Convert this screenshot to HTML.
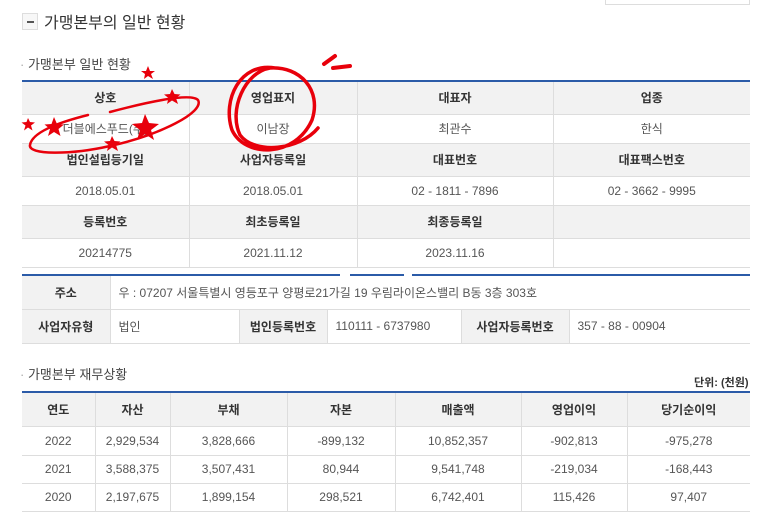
<!DOCTYPE html>
<html><head><meta charset="utf-8"><style>
*{margin:0;padding:0;box-sizing:border-box}
body{width:773px;height:531px;background:#fff;position:relative;overflow:hidden;font-family:"Liberation Sans","Noto Sans CJK KR",sans-serif;color:#555;font-size:12px}
.a{position:absolute}
table{position:absolute;border-collapse:collapse;table-layout:fixed}
td{border:1px solid #ddd;text-align:center;color:#555;font-size:12px;padding:0}
td.h{background:#f2f2f2;font-weight:bold;color:#333}
tr:first-child td{border-top:none}
td:first-child{border-left:none}td:last-child{border-right:none}
.blue{position:absolute;height:2px;background:#2b5ba8}
</style></head><body>
<div class="a" style="left:605px;top:0;width:145px;height:5px;border:1px solid #ddd;border-top:none"></div>
<div class="a" style="left:22px;top:13px;width:16px;height:17px;border:1px solid #ddd;background:#f7f7f7"><div class="a" style="left:4px;top:7px;width:7px;height:2px;background:#555"></div></div>
<div class="a" style="left:44px;top:9px;font-size:16px;color:#333">가맹본부의 일반 현황</div>
<div class="a" style="left:20px;top:54px;font-size:13px;color:#444"><span style="color:#aaa">·</span> 가맹본부 일반 현황</div>

<div class="blue" style="left:22px;top:80px;width:728px"></div>
<table style="left:22px;top:82px;width:728px">
<colgroup><col style="width:167px"><col style="width:168px"><col style="width:196px"><col style="width:197px"></colgroup>
<tr style="height:32px"><td class="h">상호</td><td class="h">영업표지</td><td class="h">대표자</td><td class="h">업종</td></tr>
<tr style="height:29px"><td>더블에스푸드(주)</td><td>이남장</td><td>최관수</td><td>한식</td></tr>
<tr style="height:33px"><td class="h">법인설립등기일</td><td class="h">사업자등록일</td><td class="h">대표번호</td><td class="h">대표팩스번호</td></tr>
<tr style="height:29px"><td>2018.05.01</td><td>2018.05.01</td><td>02 - 1811 - 7896</td><td>02 - 3662 - 9995</td></tr>
<tr style="height:33px"><td class="h">등록번호</td><td class="h">최초등록일</td><td class="h">최종등록일</td><td class="h"></td></tr>
<tr style="height:29px"><td>20214775</td><td>2021.11.12</td><td>2023.11.16</td><td></td></tr>
</table>

<div class="blue" style="left:22px;top:274px;width:728px"></div>
<table style="left:22px;top:276px;width:728px">
<colgroup><col style="width:88px"><col style="width:129px"><col style="width:88px"><col style="width:134px"><col style="width:108px"><col style="width:181px"></colgroup>
<tr style="height:33px"><td class="h">주소</td><td colspan="5" style="text-align:left;padding-left:8px">우 : 07207 서울특별시 영등포구 양평로21가길 19 우림라이온스밸리 B동 3층 303호</td></tr>
<tr style="height:34px"><td class="h">사업자유형</td><td style="text-align:left;padding-left:8px">법인</td><td class="h">법인등록번호</td><td style="text-align:left;padding-left:8px">110111 - 6737980</td><td class="h">사업자등록번호</td><td style="text-align:left;padding-left:8px">357 - 88 - 00904</td></tr>
</table>

<div class="a" style="left:20px;top:364px;font-size:13px;color:#444"><span style="color:#aaa">·</span> 가맹본부 재무상황</div>
<div class="a" style="left:694px;top:374px;font-size:11px;color:#333;font-weight:bold">단위: (천원)</div>
<div class="blue" style="left:22px;top:391px;width:728px"></div>
<table style="left:22px;top:393px;width:728px">
<colgroup><col style="width:73px"><col style="width:75px"><col style="width:117px"><col style="width:108px"><col style="width:126px"><col style="width:106px"><col style="width:123px"></colgroup>
<tr style="height:33px"><td class="h">연도</td><td class="h">자산</td><td class="h">부채</td><td class="h">자본</td><td class="h">매출액</td><td class="h">영업이익</td><td class="h">당기순이익</td></tr>
<tr style="height:29px"><td>2022</td><td>2,929,534</td><td>3,828,666</td><td>-899,132</td><td>10,852,357</td><td>-902,813</td><td>-975,278</td></tr>
<tr style="height:28px"><td>2021</td><td>3,588,375</td><td>3,507,431</td><td>80,944</td><td>9,541,748</td><td>-219,034</td><td>-168,443</td></tr>
<tr style="height:28px"><td>2020</td><td>2,197,675</td><td>1,899,154</td><td>298,521</td><td>6,742,401</td><td>115,426</td><td>97,407</td></tr>
</table>

<svg class="a" style="left:0;top:0" width="773" height="531">
<g fill="none" stroke="#e8000b" stroke-linecap="round">
<path d="M275 68 C240 62 222 100 232 130 C245 158 295 158 312 120 C322 90 300 66 270 68 C245 72 228 110 240 135 C255 155 300 150 318 128" stroke-width="3.5"/>
<path d="M324 64 L335 56" stroke-width="4"/>
<path d="M333 68 L350 66" stroke-width="4"/>
<path d="M110 112 C140 104 190 92 198 100 C205 112 160 135 110 146 C70 155 28 155 30 145 C32 132 60 122 88 115" stroke-width="2.5"/>
</g>
<g fill="#e8000b">
<path d="M148 66 l2 5 5 0 -4 3 2 5 -5 -3 -4 3 1 -5 -4 -3 5 0z"/>
<path d="M172 89 l2.5 5 6 0.5 -4.5 3.5 2 6 -6 -3.5 -5 3.5 1.5 -6 -4.5 -3.5 6 -0.5z"/>
<path d="M28 118 l2 4 5 0.5 -4 3 1.5 5 -4.5 -3 -4 3 1.5 -5 -4 -3 5 -0.5z"/>
<path d="M54 117 l3 7 7 0.5 -5.5 4.5 2 7 -6.5 -4 -6 4 2 -7 -5.5 -4.5 7 -0.5z"/>
<path d="M145 114 l4 9 10 1 -8 6 3 10 -9 -6 -8 6 3 -10 -8 -6 10 -1z"/>
<path d="M112 136 l2.5 5 6 0.5 -4.5 3.5 2 6 -6 -3.5 -5 3.5 1.5 -6 -4.5 -3.5 6 -0.5z"/>
</g>
<g fill="#fff"><rect x="340" y="268" width="10" height="8"/><rect x="404" y="268" width="8" height="8"/></g>
</svg>
</body></html>
